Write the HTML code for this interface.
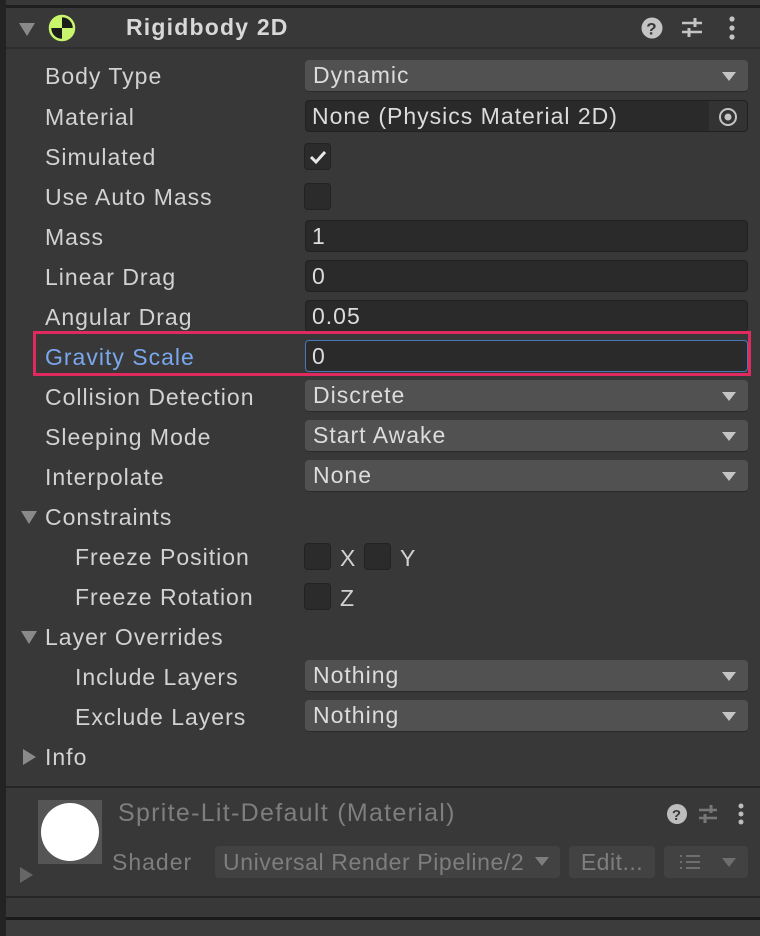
<!DOCTYPE html>
<html><head><style>
*{margin:0;padding:0;box-sizing:border-box}
body{width:760px;height:936px;background:#383838;position:relative;overflow:hidden;font-family:"Liberation Sans",sans-serif;color:#d2d2d2;font-size:23px;letter-spacing:1px}
.a{position:absolute}
.lbl{position:absolute;left:45px;height:40px;line-height:40px;white-space:nowrap}
.dd{position:absolute;left:305px;width:443px;height:32px;background:#515151;border-radius:4px;border-bottom:1px solid #2a2a2a;line-height:31px;padding-left:8px;color:#dcdcdc}
.dd:after{content:"";position:absolute;right:12px;top:12px;border-left:7px solid transparent;border-right:7px solid transparent;border-top:9px solid #c4c4c4}
.tf{position:absolute;left:305px;width:443px;height:32px;background:#2a2a2a;border:1px solid #212121;border-radius:4px;line-height:30px;padding-left:6px;color:#dcdcdc}
.cb{position:absolute;width:27px;height:27px;background:#2b2b2b;border:1px solid #222;border-radius:4px}
.tri{position:absolute;border-left:8px solid transparent;border-right:8px solid transparent;border-top:13px solid #8a8a8a}
</style></head><body>
<div class="a" style="left:0;top:0;width:6px;height:936px;background:#232323"></div>
<div class="a" style="left:6px;top:5px;width:754px;height:3px;background:#1e1e1e"></div>
<div class="a" style="left:6px;top:47px;width:754px;height:2px;background:#2e2e2e"></div>
<div class="tri" style="left:19px;top:23px"></div>
<svg class="a" style="left:48px;top:14px" width="28" height="28" viewBox="0 0 28 28"><circle cx="14" cy="14" r="12" fill="#c8f56b"/><path d="M14 3A11 11 0 0 1 25 14H14Z M14 14H3A11 11 0 0 0 14 25Z" fill="#1b1b1b"/><circle cx="14" cy="14" r="12" fill="none" stroke="#c8f56b" stroke-width="2.5"/></svg>
<div class="a" style="left:126px;top:14px;font-weight:bold;font-size:23px;color:#d8d8d8;letter-spacing:1.2px">Rigidbody 2D</div>
<svg class="a" style="left:640px;top:15px" width="110" height="26" viewBox="0 0 110 26"><circle cx="12" cy="13" r="10.5" fill="#c4c4c4"/><text x="12" y="19.5" font-size="17" font-weight="bold" text-anchor="middle" fill="#383838" font-family="Liberation Sans">?</text><path d="M42 8h20M42 17h20" stroke="#c4c4c4" stroke-width="2.5"/><path d="M55 3v9M49 13v9" stroke="#c4c4c4" stroke-width="3"/><circle cx="92" cy="4" r="2.6" fill="#c4c4c4"/><circle cx="92" cy="13" r="2.6" fill="#c4c4c4"/><circle cx="92" cy="22" r="2.6" fill="#c4c4c4"/></svg>

<div class="lbl" style="top:56px">Body Type</div><div class="dd" style="top:60px">Dynamic</div>
<div class="lbl" style="top:97px">Material</div><div class="tf" style="top:100px">None (Physics Material 2D)<div class="a" style="right:0;top:0;width:38px;height:30px;background:#333;border-radius:0 4px 4px 0"></div><svg class="a" style="right:9px;top:6px" width="20" height="20"><circle cx="10" cy="10" r="8" fill="none" stroke="#c4c4c4" stroke-width="2"/><circle cx="10" cy="10" r="3.5" fill="#c4c4c4"/></svg></div>
<div class="lbl" style="top:137px">Simulated</div><div class="cb" style="left:304px;top:143px"><svg width="25" height="25"><path d="M6 13l5 5 9-10" fill="none" stroke="#e8e8e8" stroke-width="3"/></svg></div>
<div class="lbl" style="top:177px">Use Auto Mass</div><div class="cb" style="left:304px;top:183px"></div>
<div class="lbl" style="top:217px">Mass</div><div class="tf" style="top:220px">1</div>
<div class="lbl" style="top:257px">Linear Drag</div><div class="tf" style="top:260px">0</div>
<div class="lbl" style="top:297px">Angular Drag</div><div class="tf" style="top:300px">0.05</div>
<div class="a" style="left:33px;top:331px;width:718px;height:45px;border:3px solid #e0295f"></div>
<div class="lbl" style="top:337px;color:#7aa7ee">Gravity Scale</div><div class="tf" style="top:340px;border-color:#4a77b8">0</div>
<div class="lbl" style="top:377px">Collision Detection</div><div class="dd" style="top:380px">Discrete</div>
<div class="lbl" style="top:417px">Sleeping Mode</div><div class="dd" style="top:420px">Start Awake</div>
<div class="lbl" style="top:457px">Interpolate</div><div class="dd" style="top:460px">None</div>
<div class="tri" style="left:21px;top:511px"></div><div class="lbl" style="top:497px">Constraints</div>
<div class="lbl" style="top:537px;left:75px">Freeze Position</div>
<div class="cb" style="left:304px;top:543px"></div><div class="a" style="left:340px;top:545px">X</div>
<div class="cb" style="left:364px;top:543px"></div><div class="a" style="left:400px;top:545px">Y</div>
<div class="lbl" style="top:577px;left:75px">Freeze Rotation</div>
<div class="cb" style="left:304px;top:583px"></div><div class="a" style="left:340px;top:585px">Z</div>
<div class="tri" style="left:21px;top:631px"></div><div class="lbl" style="top:617px">Layer Overrides</div>
<div class="lbl" style="top:657px;left:75px">Include Layers</div><div class="dd" style="top:660px">Nothing</div>
<div class="lbl" style="top:697px;left:75px">Exclude Layers</div><div class="dd" style="top:700px">Nothing</div>
<div class="a" style="left:23px;top:749px;border-top:8px solid transparent;border-bottom:8px solid transparent;border-left:13px solid #8a8a8a"></div>
<div class="lbl" style="top:737px">Info</div>

<div class="a" style="left:6px;top:786px;width:754px;height:2px;background:#262626"></div>
<div class="a" style="left:38px;top:800px;width:64px;height:64px;background:#555"><div class="a" style="left:3px;top:3px;width:58px;height:58px;border-radius:50%;background:#fff"></div></div>
<div class="a" style="left:20px;top:867px;border-top:8px solid transparent;border-bottom:8px solid transparent;border-left:13px solid #666"></div>
<div class="a" style="left:118px;top:799px;color:#7e7e7e;font-size:25px;letter-spacing:1.3px">Sprite-Lit-Default (Material)</div>
<svg class="a" style="left:666px;top:802px" width="84" height="24" viewBox="0 0 84 24"><circle cx="11" cy="12" r="10" fill="#bdbdbd"/><text x="11" y="18" font-size="15" font-weight="bold" text-anchor="middle" fill="#383838" font-family="Liberation Sans">?</text><path d="M33 8h18M33 16h18" stroke="#777" stroke-width="2.5"/><path d="M45 3v8M39 12v9" stroke="#777" stroke-width="3"/><circle cx="75" cy="4" r="2.5" fill="#bdbdbd"/><circle cx="75" cy="12" r="2.5" fill="#bdbdbd"/><circle cx="75" cy="20" r="2.5" fill="#bdbdbd"/></svg>
<div class="a" style="left:112px;top:849px;color:#7e7e7e">Shader</div>
<div class="a" style="left:215px;top:846px;width:345px;height:32px;background:#424242;border-radius:4px;color:#7e7e7e;line-height:32px;padding-left:8px;white-space:nowrap;overflow:hidden;letter-spacing:0.6px">Universal Render Pipeline/2</div>
<div class="a" style="left:535px;top:857px;border-left:7px solid transparent;border-right:7px solid transparent;border-top:9px solid #7e7e7e"></div>
<div class="a" style="left:569px;top:846px;width:86px;height:32px;background:#424242;border-radius:4px;color:#7e7e7e;line-height:32px;text-align:center;letter-spacing:0.5px">Edit...</div>
<div class="a" style="left:664px;top:846px;width:84px;height:32px;background:#424242;border-radius:4px"><svg width="84" height="32"><path d="M22 10h14M22 16h14M22 22h14" stroke="#6e6e6e" stroke-width="2"/><path d="M16 10h2M16 16h2M16 22h2" stroke="#6e6e6e" stroke-width="2"/><path d="M58 12h14l-7 9z" fill="#6e6e6e"/></svg></div>
<div class="a" style="left:6px;top:896px;width:754px;height:2px;background:#262626"></div>
<div class="a" style="left:6px;top:917px;width:754px;height:3px;background:#1a1a1a"></div>
<div class="a" style="left:6px;top:920px;width:754px;height:16px;background:#3c3c3c"></div>
</body></html>
